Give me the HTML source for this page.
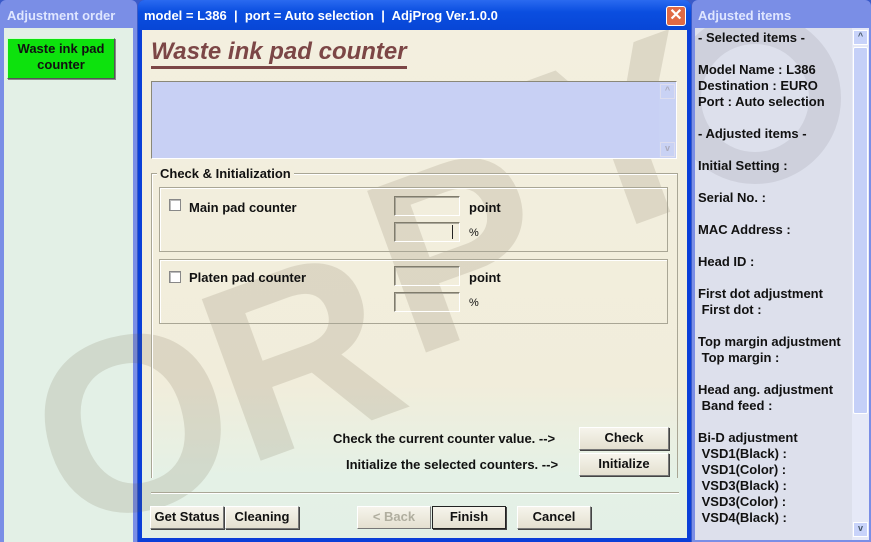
<!DOCTYPE html>
<html><head><meta charset="utf-8"><style>
*{margin:0;padding:0;box-sizing:border-box}
html,body{width:871px;height:542px;overflow:hidden}
body{position:relative;font-family:"Liberation Sans",Arial,sans-serif;font-size:13px;font-weight:bold;color:#111;background:#3a5ac8}
.abs{position:absolute}
.tb{color:#fff;font-weight:bold;font-size:13px}
.btn{position:absolute;background:linear-gradient(#f6f4ec,#e4e0d0);border:1px solid;border-color:#fff #777 #777 #fff;box-shadow:1px 1px 0 #444;text-align:center;font-size:13px;line-height:20px}
.box{position:absolute;border:1px solid #a9a695;box-shadow:inset 1px 1px 0 #fff}
.inp{position:absolute;width:66px;height:20px;border:1px solid;border-color:#807c6c #fff #fff #807c6c;box-shadow:inset 1px 1px 0 #aaa79a}
.cb{position:absolute;width:12px;height:12px;border:1px solid #888;background:#fff;box-shadow:inset 1px 1px 0 #bbb}
</style></head><body>
<!-- left panel -->
<div class="abs" style="left:0;top:0;width:137px;height:542px;background:#7a8ee6;border-radius:6px 6px 0 0"></div>
<div class="abs tb" style="left:7px;top:8px;color:#dfe6ff">Adjustment order</div>
<div class="abs" style="left:4px;top:28px;width:129px;height:514px;background:#e3f0e6"></div>
<div class="abs" style="left:7px;top:38px;width:108px;height:41px;background:#0de20d;border:1px solid;border-color:#cfc #555 #555 #cfc;box-shadow:1px 1px 0 #888;text-align:center;font-size:13px;line-height:16px;padding-top:2px">Waste ink pad<br>counter</div>
<!-- main window -->
<div class="abs" style="left:138px;top:0;width:553px;height:542px;background:#0a3fd8;border-radius:7px 7px 0 0"></div>
<div class="abs" style="left:138px;top:0;width:553px;height:30px;background:linear-gradient(#2a6af0,#0a4ee0 40%,#0846d6);border-radius:7px 7px 0 0"></div>
<div class="abs tb" style="left:144px;top:8px">model = L386 &nbsp;|&nbsp; port = Auto selection &nbsp;|&nbsp; AdjProg Ver.1.0.0</div>
<div class="abs" style="left:666px;top:6px;width:20px;height:20px;background:#e06a45;border:1px solid #fff;border-radius:3px;color:#fff;text-align:center;line-height:18px;font-size:16px">✕</div>
<div class="abs" style="left:142px;top:30px;width:545px;height:508px;background:linear-gradient(#f3efdf,#f1eddb 70%,#e4f1e6 88%,#e3f0e6)"></div>
<!-- watermark -->
<svg class="abs" style="left:0;top:0" width="871" height="542"><g fill="rgba(100,90,60,0.15)" font-family="Liberation Sans,sans-serif" font-size="250"><text x="35" y="510" transform="rotate(-15 130 420)">O</text><text x="205" y="440" transform="rotate(-20 300 340)">R</text><text x="370" y="330" transform="rotate(-20 470 230)">P</text><text x="535" y="220" transform="rotate(-20 630 120)">Y</text><text x="690" y="210" transform="rotate(-20 780 110)">S</text></g></svg>
<div class="abs" style="left:151px;top:38px;font-family:'Liberation Sans',sans-serif;font-style:italic;font-weight:bold;font-size:24px;color:#7c4646">Waste ink pad counter</div>
<div class="abs" style="left:151px;top:66px;width:256px;height:3px;background:#7c4646"></div>
<div class="abs" style="left:151px;top:81px;width:526px;height:78px;background:#c8d0f4;border:1px solid;border-color:#8a8878 #fff #fff #8a8878"></div>
<div class="abs" style="left:659px;top:82px;width:17px;height:76px;background:#c9d2f4"></div>
<div class="abs" style="left:660px;top:84px;width:15px;height:15px;border:1px solid #dde;font-size:9px;color:#aab;text-align:center">^</div>
<div class="abs" style="left:660px;top:142px;width:15px;height:15px;border:1px solid #dde;font-size:9px;color:#aab;text-align:center">v</div>
<div class="box" style="left:151px;top:173px;width:527px;height:305px;border-bottom:none"></div>
<div class="abs" style="left:157px;top:166px;background:#f2eedd;padding:0 3px">Check &amp; Initialization</div>
<div class="box" style="left:159px;top:187px;width:509px;height:65px"></div>
<div class="cb" style="left:169px;top:199px"></div>
<div class="abs" style="left:189px;top:200px">Main pad counter</div>
<div class="inp" style="left:394px;top:196px"></div><div class="abs" style="left:469px;top:200px">point</div>
<div class="inp" style="left:394px;top:222px"></div><div class="abs" style="left:452px;top:225px;width:1px;height:14px;background:#222"></div><div class="abs" style="left:469px;top:227px;font-size:11px;font-weight:normal">%</div>
<div class="box" style="left:159px;top:259px;width:509px;height:65px"></div>
<div class="cb" style="left:169px;top:271px"></div>
<div class="abs" style="left:189px;top:270px">Platen pad counter</div>
<div class="inp" style="left:394px;top:266px"></div><div class="abs" style="left:469px;top:270px">point</div>
<div class="inp" style="left:394px;top:292px"></div><div class="abs" style="left:469px;top:297px;font-size:11px;font-weight:normal">%</div>
<div class="abs" style="left:333px;top:431px">Check the current counter value. --&gt;</div>
<div class="btn" style="left:579px;top:427px;width:90px;height:23px">Check</div>
<div class="abs" style="left:346px;top:457px">Initialize the selected counters. --&gt;</div>
<div class="btn" style="left:579px;top:453px;width:90px;height:23px">Initialize</div>
<div class="abs" style="left:151px;top:492px;width:528px;height:1px;background:#a9a695;box-shadow:0 1px 0 #fff"></div>
<div class="btn" style="left:150px;top:506px;width:74px;height:23px">Get Status</div>
<div class="btn" style="left:225px;top:506px;width:74px;height:23px">Cleaning</div>
<div class="btn" style="left:357px;top:506px;width:74px;height:23px;color:#b0ae9f;box-shadow:none">&lt; Back</div>
<div class="btn" style="left:432px;top:506px;width:74px;height:23px;border:1px solid #222">Finish</div>
<div class="btn" style="left:517px;top:506px;width:74px;height:23px">Cancel</div>
<!-- right panel -->
<div class="abs" style="left:692px;top:0;width:179px;height:542px;background:#7a8ee6;border-radius:6px 6px 0 0"></div>
<div class="abs tb" style="left:698px;top:8px;color:#dfe6ff">Adjusted items</div>
<div class="abs" style="left:695px;top:28px;width:174px;height:512px;background:#dde0ec"></div>
<svg class="abs" style="left:695px;top:28px" width="157" height="200"><circle cx="60" cy="70" r="70" fill="none" stroke="rgba(100,100,110,0.12)" stroke-width="32"/></svg>
<div class="abs" style="left:852px;top:28px;width:17px;height:512px;background:#e6e9f7"></div>
<div class="abs" style="left:853px;top:30px;width:15px;height:15px;background:#c8d3fa;border:1px solid #fff;font-size:9px;color:#456;text-align:center">^</div>
<div class="abs" style="left:853px;top:47px;width:15px;height:367px;background:#c5d0f8;border:1px solid #fff;border-radius:2px"></div>
<div class="abs" style="left:853px;top:522px;width:15px;height:15px;background:#c8d3fa;border:1px solid #fff;font-size:9px;color:#456;text-align:center">v</div>
<div class="abs" style="left:698px;top:30px;line-height:16px;font-size:13px">- Selected items -<br><br>Model Name : L386<br>Destination : EURO<br>Port : Auto selection<br><br>- Adjusted items -<br><br>Initial Setting :<br><br>Serial No. :<br><br>MAC Address :<br><br>Head ID :<br><br>First dot adjustment<br>&nbsp;First dot :<br><br>Top margin adjustment<br>&nbsp;Top margin :<br><br>Head ang. adjustment<br>&nbsp;Band feed :<br><br>Bi-D adjustment<br>&nbsp;VSD1(Black) :<br>&nbsp;VSD1(Color) :<br>&nbsp;VSD3(Black) :<br>&nbsp;VSD3(Color) :<br>&nbsp;VSD4(Black) :</div>
</body></html>
